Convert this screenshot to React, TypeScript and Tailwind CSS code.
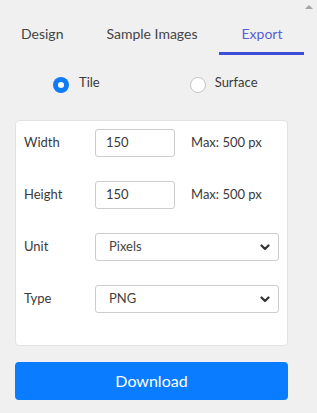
import React, { useState } from 'react';

const tabs = ['Design', 'Sample Images', 'Export'];

function Chevron() {
    return (
        <svg className="h-[9px] w-[10px] text-[#333]" viewBox="0 0 10 9" fill="none" stroke="currentColor" strokeWidth={2.2}>
            <path strokeLinecap="round" strokeLinejoin="round" d="M1.5 2.5 5 6l3.5-3.5" />
        </svg>
    );
}

function Row({ label, children }: { label: string; children: React.ReactNode }) {
    return (
        <div className="flex h-[28px] items-center">
            <span className="w-[71px] text-[13px] text-[#3a3a3a]">{label}</span>
            {children}
        </div>
    );
}

function Select({ value }: { value: string }) {
    return (
        <div className="flex h-[28px] w-[184px] items-center justify-between rounded-[3px] border border-[#ccc] bg-white pl-[13px] pr-[8px] text-[13px] text-[#444]">
            <span>{value}</span>
            <Chevron />
        </div>
    );
}

export default function App() {
    const [active, setActive] = useState(2);
    const [shape, setShape] = useState<'tile' | 'surface'>('tile');

    return (
        <div className="relative h-[413px] w-[317px] bg-[#f0f0f0] font-['Lato',sans-serif]">
            {/* scrollbar arrow */}
            <div className="absolute right-[4px] top-[5px] h-0 w-0 border-x-[4px] border-b-[4px] border-x-transparent border-b-[#a3a3a3]" />

            <div className="w-[303px]">
                <div className="flex">
                    {tabs.map((t, i) => (
                        <button
                            key={t}
                            onClick={() => setActive(i)}
                            className={
                                'shrink-0 whitespace-nowrap border-b-[3px] pb-[8px] pt-[24px] text-[14px] leading-[20px] ' +
                                (i === 0 ? 'px-[21px] ' : 'px-[22px] ') +
                                (i === active ? 'border-[#3d4fd9] text-[#5a5fd6]' : 'border-transparent text-[#444]')
                            }
                        >
                            {t}
                        </button>
                    ))}
                </div>

                <div className="mt-[22px] flex pl-[53px]">
                    <button onClick={() => setShape('tile')} className="flex items-start gap-[10px]">
                        <span
                            className={
                                'flex h-[16px] w-[16px] items-center justify-center rounded-full ' +
                                (shape === 'tile' ? 'bg-[#0f7bf4]' : 'border border-[#c6c6c6] bg-white')
                            }
                        >
                            {shape === 'tile' && <span className="h-[6px] w-[6px] rounded-full bg-white" />}
                        </span>
                        <span className="-mt-[4px] text-[13px] leading-[18px] text-[#3a3a3a]">Tile</span>
                    </button>
                    <button onClick={() => setShape('surface')} className="ml-[90px] flex items-start gap-[9px]">
                        <span
                            className={
                                'flex h-[16px] w-[16px] items-center justify-center rounded-full ' +
                                (shape === 'surface' ? 'bg-[#0f7bf4]' : 'border border-[#c6c6c6] bg-white')
                            }
                        >
                            {shape === 'surface' && <span className="h-[6px] w-[6px] rounded-full bg-white" />}
                        </span>
                        <span className="-mt-[4px] text-[13px] leading-[18px] text-[#3a3a3a]">Surface</span>
                    </button>
                </div>

                <div className="mx-[15px] mt-[27px] flex flex-col gap-[24px] rounded-[4px] border border-[#e2e2e2] bg-white pb-[32px] pl-[8px] pr-[8px] pt-[8px]">
                    <Row label="Width">
                        <div className="flex h-[28px] w-[80px] items-center rounded-[3px] border border-[#ccc] pl-[10px] text-[13px] text-[#3a3a3a]">150</div>
                        <span className="ml-[16px] text-[13px] text-[#3a3a3a]">Max: 500 px</span>
                    </Row>
                    <Row label="Height">
                        <div className="flex h-[28px] w-[80px] items-center rounded-[3px] border border-[#ccc] pl-[10px] text-[13px] text-[#3a3a3a]">150</div>
                        <span className="ml-[16px] text-[13px] text-[#3a3a3a]">Max: 500 px</span>
                    </Row>
                    <Row label="Unit">
                        <Select value="Pixels" />
                    </Row>
                    <Row label="Type">
                        <Select value="PNG" />
                    </Row>
                </div>

                <button className="mx-[15px] mt-[16px] h-[38px] w-[273px] rounded-[4px] bg-[#0a7cff] text-[16px] text-white">
                    Download
                </button>
            </div>
        </div>
    );
}
